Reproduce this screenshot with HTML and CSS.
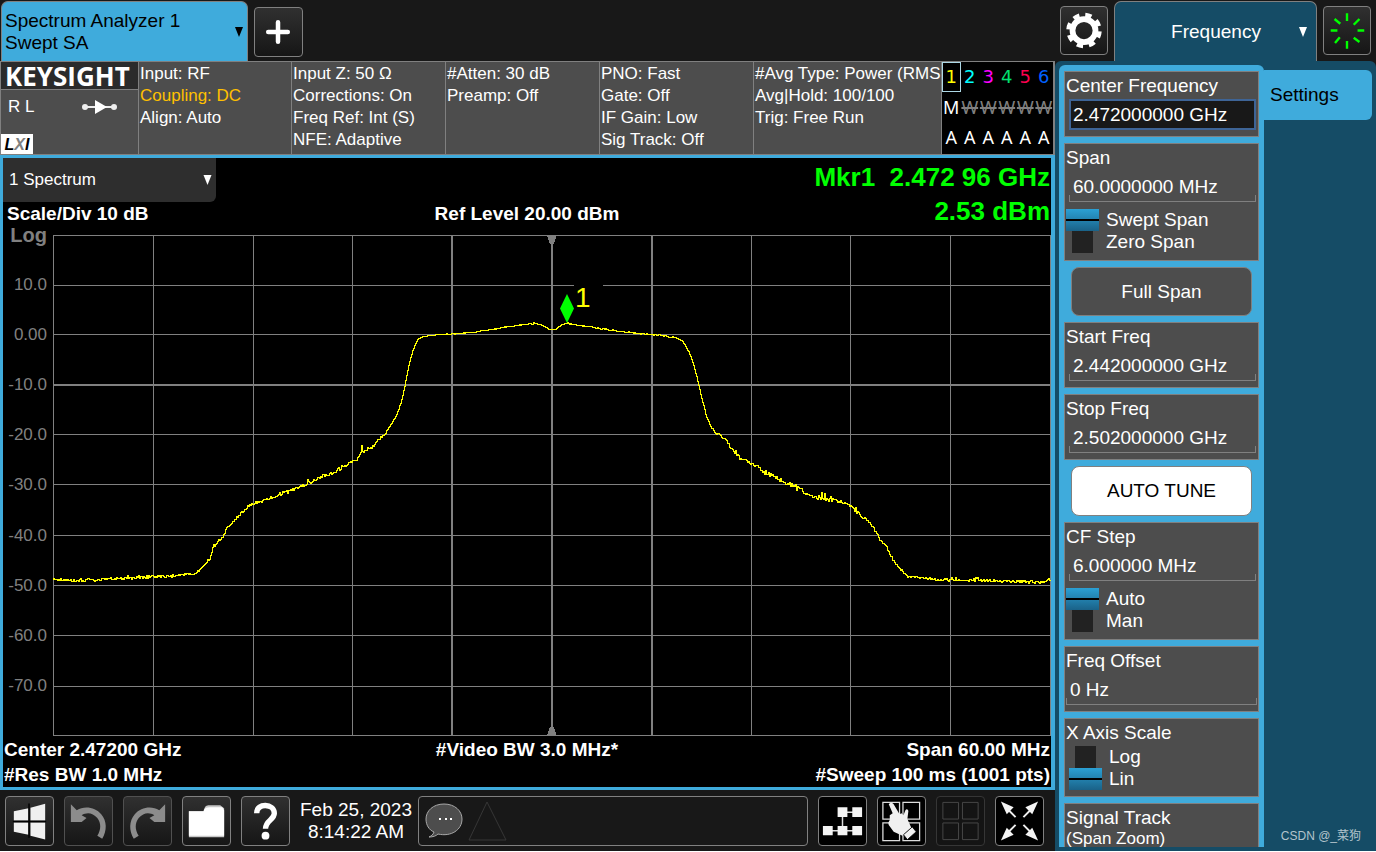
FILE: index.html
```html
<!DOCTYPE html>
<html lang="en">
<head>
<meta charset="utf-8">
<title>Spectrum Analyzer 1 - Swept SA</title>
<link rel="stylesheet" href="styles.css">
</head>
<body>
<div class="app">
  <div class="main">
    <header class="topbar">
      <button class="mode-tab" type="button"><span>Spectrum Analyzer 1<br>Swept SA</span><svg class="caret" viewBox="0 0 8 10"><path d="M0 0h8L4 10z"/></svg></button>
      <button class="key" type="button" aria-label="Add screen"><svg viewBox="0 0 48 48"><path d="M23.500 14v20M13.500 24h20" stroke="#fff" stroke-width="4.600" stroke-linecap="round"/></svg></button>
    </header>

    <section class="info">
      <div class="brand">
        <div class="brand-name">KEYSIGHT</div>
        <div class="brand-row"><span>R L</span><svg class="coupler" viewBox="0 0 36 14"><path d="M3 7h30" stroke="#eee" stroke-width="2"/><circle cx="3" cy="7" r="3" fill="#eee"/><circle cx="32" cy="7" r="3" fill="#eee"/><path d="M13 0l12 7-12 7z" fill="#fff"/></svg></div>
        <div class="lxi"><b>L</b><i>X</i><b>I</b></div>
      </div>
      <div class="info-cell">Input: RF<br><span class="amber">Coupling: DC</span><br>Align: Auto</div>
      <div class="info-cell">Input Z: 50 Ω<br>Corrections: On<br>Freq Ref: Int (S)<br>NFE: Adaptive</div>
      <div class="info-cell">#Atten: 30 dB<br>Preamp: Off</div>
      <div class="info-cell">PNO: Fast<br>Gate: Off<br>IF Gain: Low<br>Sig Track: Off</div>
      <div class="info-cell">#Avg Type: Power (RMS<br>Avg|Hold: 100/100<br>Trig: Free Run</div>
      <div class="traces">
        <span class="num t1">1</span><span class="num t2">2</span><span class="num t3">3</span><span class="num t4">4</span><span class="num t5">5</span><span class="num t6">6</span>
        <span>M</span><span class="off">W</span><span class="off">W</span><span class="off">W</span><span class="off">W</span><span class="off">W</span>
        <span>A</span><span>A</span><span>A</span><span>A</span><span>A</span><span>A</span>
      </div>
    </section>

    <section class="window">
      <div class="window-head">
        <div class="head-left">
          <div class="view-select">
            <select aria-label="View"><option>1 Spectrum</option></select>
            <svg class="caret" viewBox="0 0 8 10"><path d="M0 0h8L4 10z"/></svg>
          </div>
          <div class="scale">Scale/Div 10 dB</div>
        </div>
        <div class="ref">Ref Level 20.00 dBm</div>
        <div class="marker-read">Mkr1&nbsp; 2.472 96 GHz<br>2.53 dBm</div>
      </div>
      <div class="graph">
        <div class="scale-labels">
          <span class="log">Log</span><span>10.0</span><span>0.00</span><span>-10.0</span><span>-20.0</span><span>-30.0</span><span>-40.0</span><span>-50.0</span><span>-60.0</span><span>-70.0</span>
        </div>
        <div class="plot">
          <svg viewBox="0 0 998 501" preserveAspectRatio="none" shape-rendering="crispEdges">
            <path class="grid" d="M.5 0v501M100.500 0v501M200.500 0v501M299.500 0v501M698.500 0v501M797.500 0v501M897.500 0v501M997.500 0v501M0 .5h998M0 50.500h998M0 99.500h998M0 199.500h998M0 249.500h998M0 300.500h998M0 350.500h998M0 400.500h998M0 451.500h998M0 500.500h998"/>
            <path class="grid wide" d="M399 0v501M499 0v501M599 0v501M0 150h998"/>
            <path d="M494 0h10l-3 9h-4zM494 501h10l-3 -9h-4z" fill="#808080"/>
            <path id="trace" class="trace"/>
          </svg>
          <div class="marker"><svg viewBox="0 0 14 29"><path d="M7 0l7 14.500-7 14.500-7-14.500z" fill="#0f0"/></svg><span>1</span></div>
        </div>
      </div>
      <div class="window-foot">
        <div>Center 2.47200 GHz<br>#Res BW 1.0 MHz</div>
        <div>#Video BW 3.0 MHz*</div>
        <div class="right">Span 60.00 MHz<br>#Sweep 100 ms (1001 pts)</div>
      </div>
    </section>

    <footer class="toolbar">
      <button class="key" type="button" aria-label="Windows"><svg viewBox="0 0 48 48"><path d="M8 14l15-3v12.500H8zM25 10.500l15-4v17H25zM8 25.500h15V38L8 35zM25 25.500h15V43l-15-4z" fill="#f0f0f0"/><path d="M23.500 6v35M7 24.500h34" stroke="#000" stroke-width="1.500"/></svg></button>
      <button class="key dim" type="button" aria-label="Undo"><svg viewBox="0 0 48 48"><path d="M6 7l6 6c8-5 19-3 25 4 6 7 6 17 1 25l-5-3c4-6 4-13 0-18-5-6-11-6-16-3l5 3-5 4H6z" fill="#8c8c8c"/></svg></button>
      <button class="key dim" type="button" aria-label="Redo"><svg viewBox="0 0 48 48"><path d="M42 7l-6 6c-8-5-19-3-25 4-6 7-6 17-1 25l5-3c-4-6-4-13 0-18 5-6 11-6 16-3l-5 3 5 4h11z" fill="#8c8c8c"/></svg></button>
      <button class="key" type="button" aria-label="File"><svg viewBox="0 0 48 48"><path d="M6 14h15c1-5 3-6 6-6h11l4 3v29.500H6z" fill="#c8c8c8"/><path d="M6 14h15c1-3 3-4 6-4h13l2 3v26H6z" fill="#fff"/></svg></button>
      <button class="key" type="button" aria-label="Help"><svg viewBox="0 0 48 48"><path d="M15 16c0-11 18-10 18 0 0 7-9 7-9 16" fill="none" stroke="#fff" stroke-width="5.500"/><circle cx="24" cy="39" r="4" fill="#fff"/></svg></button>
      <div class="clock">Feb 25, 2023<br>8:14:22 AM</div>
      <div class="messages">
        <svg viewBox="0 0 82 40"><path d="M19 1C8 1 1 8 1 16c0 6 3 11 8 13-1 3-3 4-5 5 4 0 7-1 9-3 13 3 24-4 24-15C37 8 30 1 19 1z" fill="#4d4d4d" stroke="#a8a8a8"/><path d="M14 16h2m4 0h2m3 0h2" stroke="#fff" stroke-width="2"/><path d="M62-1L44 37h37z" fill="none" stroke="#363636"/></svg>
      </div>
      <button class="key black" type="button" aria-label="Sequence"><svg viewBox="0 0 48 48"><path d="M24 15h15M24 15v19M9 34h30" stroke="#ddd" stroke-width="1.500"/><path d="M19 10h10v10H19zM34 10h10v10H34zM4 29h10v9.500H4zM19 29h10v9.500H19zM34 29h10v9.500H34z" fill="#f4f4f4"/></svg></button>
      <button class="key black" type="button" aria-label="Touch layout"><svg viewBox="0 0 48 48"><path d="M5 5h17v17H5zM25.500 5h17v17h-17zM5 26h17v18H5zM25.500 26h17v18h-17z" fill="none" stroke="#ddd" stroke-width="1.300"/><path d="M11 7c1-2 4-2 5 0l6 10 2-1 2 2 2-5c1-2 3-1 3 1l-1 8 4 9-9 8-9-4-5-7c-1-2 0-3 1-5l0-5 3-2z" fill="#f0f0f0"/><path d="M26 38l9-8 4 5-9 8z" fill="#f0f0f0" stroke="#000" stroke-width=".8"/></svg></button>
      <button class="key faint" type="button" aria-label="Layout"><svg viewBox="0 0 48 48"><path d="M6 5h16v17H6zM26 5h16v17H26zM6 26h16v17H6zM26 26h16v17H26z" fill="none" stroke="#484848"/></svg></button>
      <button class="key black" type="button" aria-label="Full screen"><svg viewBox="0 0 48 48"><path d="M12 12l8 8M36 12l-8 8M12 36l8-8M36 36l-8-8" stroke="#eee" stroke-width="2"/><path d="M5 4l13 6-7 7zM43 4l-13 6 7 7zM5 44l13-6-7-7zM43 44l-13-6 7-7z" fill="#f4f4f4"/></svg></button>
    </footer>
  </div>

  <aside class="side">
    <div class="side-top">
      <button class="key" type="button" aria-label="Settings menu"><svg viewBox="0 0 48 48"><circle cx="24" cy="24" r="12" fill="none" stroke="#fff" stroke-width="6"/><circle cx="24" cy="24" r="16" fill="none" stroke="#fff" stroke-width="5" stroke-dasharray="6.500 6.066" transform="rotate(3 24 24)"/></svg></button>
      <button class="menu-tab" type="button"><span>Frequency</span><svg class="caret" viewBox="0 0 8 10"><path d="M0 0h8L4 10z"/></svg></button>
      <button class="key" type="button" aria-label="Sweep status"><svg viewBox="0 0 48 48"><path d="M24 6v8M24 35v8M7 24h7M35 24h7M11 12l6 5M37 12l-6 6M11.500 37l5-6M37 36l-6-4.500" stroke="#0f0" stroke-width="2.500"/></svg></button>
    </div>
    <div class="side-body">
      <form class="controls">
        <div class="box"><label for="cf">Center Frequency</label><input class="field active" id="cf" value="2.472000000 GHz"></div>
        <div class="box"><label for="span">Span</label><input class="field" id="span" value="60.0000000 MHz">
          <div class="toggle"><label><input type="radio" name="sp" checked>Swept Span</label><label><input type="radio" name="sp">Zero Span</label></div>
        </div>
        <button class="action" type="button">Full Span</button>
        <div class="box"><label for="start">Start Freq</label><input class="field" id="start" value="2.442000000 GHz"></div>
        <div class="box"><label for="stop">Stop Freq</label><input class="field" id="stop" value="2.502000000 GHz"></div>
        <button class="action light" type="button">AUTO TUNE</button>
        <div class="box"><label for="step">CF Step</label><input class="field" id="step" value="6.000000 MHz">
          <div class="toggle"><label><input type="radio" name="st" checked>Auto</label><label><input type="radio" name="st">Man</label></div>
        </div>
        <div class="box"><label for="off">Freq Offset</label><input class="field full" id="off" value="0 Hz"></div>
        <div class="box"><span class="title">X Axis Scale</span>
          <div class="toggle inset"><label><input type="radio" name="xs">Log</label><label><input type="radio" name="xs" checked>Lin</label></div>
        </div>
        <div class="box"><span class="title">Signal Track</span><span class="sub">(Span Zoom)</span></div>
      </form>
      <div class="side-tabs">
        <button class="side-tab" type="button">Settings</button>
        <div class="credit">CSDN @_菜狗</div>
      </div>
    </div>
  </aside>
</div>
<script src="trace.js"></script>
</body>
</html>
```

FILE: styles.css
```css
* { box-sizing: border-box; }
body { margin: 0; background: #fff; font: 19px/22px "Liberation Sans", Arial, "Noto Sans CJK SC", sans-serif; color: #fff; }
button, input, select { font: inherit; color: inherit; margin: 0; }
button { padding: 0; cursor: pointer; }
svg { display: block; }

.app { display: flex; height: calc(100vh - 1px); min-height: 600px; background: #181818; overflow: hidden; }
.main { flex: 1; min-width: 0; display: flex; flex-direction: column; }

.key { flex: none; width: 49px; height: 50px; border: 1px solid #808080; border-radius: 4px; background: linear-gradient(#303030, #161616); }
.key svg { width: 100%; height: 100%; }
.key.dim { border-color: #505050; }
.key.black { background: #000; }
.key.faint { border-color: #363636; background: #141414; }
.caret { width: 8px; height: 10px; fill: currentColor; }

.topbar { height: 61px; flex: none; display: flex; gap: 6px; padding: 1px 1px 0; }
.topbar .key { margin-top: 6px; }
.mode-tab { width: 247px; display: flex; align-items: center; justify-content: space-between; padding: 0 4px 0 3px; border: 1px solid #808080; border-bottom: 0; border-radius: 7px 7px 0 0; background: #3fabdc; color: #000; text-align: left; }

.info { flex: none; height: 94px; display: grid; grid-template-columns: 138fr 153fr 154fr 154fr 154fr 188fr 114fr; border-top: 1px solid #808080; border-bottom: 1px solid #808080; background: #4d4d4d; font-size: 17px; }
.info-cell { border-left: 1px solid #808080; padding: 1px 0 0 1px; white-space: nowrap; overflow: hidden; }
.amber { color: #ffc000; }
.brand { display: flex; flex-direction: column; border-left: 1px solid #808080; }
.brand-name { height: 28px; padding-left: 4px; border-bottom: 1px solid #808080; background: #2b2b2b; font: bold 26px/28px "Open Sans", sans-serif; }
.brand-row { display: flex; justify-content: space-between; align-items: center; padding: 6px 20px 0 7px; }
.coupler { width: 36px; height: 14px; }
.lxi { width: 32px; height: 20px; margin-top: auto; background: #fff; color: #000; font: italic bold 16px/21px "Liberation Sans", sans-serif; text-align: center; }
.lxi i { color: #808080; }
.traces { display: grid; grid-template-columns: repeat(6, 1fr); grid-template-rows: 30px 30px 30px; border: solid #808080; border-width: 0 2px 0 1px; background: #000; font: 18px/30px "Noto Sans", sans-serif; text-align: center; }
.num { font-family: "DejaVu Sans", sans-serif; font-size: 18px; }
.t1 { color: #ff0; border: 1px solid #add8e6; line-height: 28px; }
.t2 { color: #0ff; }
.t3 { color: #f0f; }
.t4 { color: #00e070; }
.t5 { color: #ff0050; }
.t6 { color: #0060ff; }
.off { color: #808080; text-decoration: line-through 2px; }

.window { flex: 1; min-height: 0; display: flex; flex-direction: column; border: solid #3fabdc; border-width: 3px 4px 3px 3px; background: #000; font-weight: bold; }
.window-head { display: grid; grid-template-columns: 1fr auto 1fr; height: 77px; flex: none; }
.view-select { width: 213px; height: 44px; position: relative; }
.view-select select { appearance: none; width: 100%; height: 100%; padding: 0 6px; border: 0; border-radius: 0 0 6px 0; background: #2e2e2e; font-size: 17px; font-weight: normal; }
.view-select .caret { position: absolute; right: 4px; top: 17px; width: 9px; pointer-events: none; }
.scale { padding-left: 4px; line-height: 24px; }
.ref { align-self: end; padding-bottom: 9px; line-height: 24px; }
.marker-read { padding: 2px 1px 0 0; font-size: 26px; line-height: 34px; color: #0f0; text-align: right; }
.graph { flex: 1; min-height: 0; display: flex; }
.scale-labels { width: 50px; flex: none; margin: -10px 0 10px; padding-right: 6px; display: grid; grid-template-rows: repeat(10, 1fr); font-size: 17px; line-height: 20px; font-weight: normal; color: #808080; text-align: right; }
.log { font-size: 20px; font-weight: bold; }
.plot { flex: 1; min-width: 0; position: relative; }
.plot > svg { width: 100%; height: 100%; }
.grid { fill: none; stroke: #808080; stroke-width: 1; }
.wide { stroke-width: 2; }
.trace { fill: none; stroke: #ff0; stroke-width: 1; }
.marker { position: absolute; left: calc(51.500% - 7px); bottom: 82.500%; display: flex; align-items: flex-end; color: #ff0; }
.marker svg { width: 14px; height: 29px; }
.marker span { margin-bottom: 12px; padding: 0 12px 0 1px; background: #000; font-size: 28px; font-weight: normal; line-height: 26px; }
.window-foot { flex: none; display: grid; grid-template-columns: 1fr auto 1fr; height: 51px; padding: 1px 1px 0; line-height: 25px; white-space: nowrap; }
.right { text-align: right; }

.toolbar { flex: none; height: 61px; display: flex; align-items: center; gap: 10px; padding: 0 11px 0 5px; }
.clock { text-align: center; white-space: nowrap; margin: 0 -4px 0 0; }
.messages { flex: 1; height: 50px; padding: 6px; border: 1px solid #808080; border-radius: 4px; }
.messages svg { width: 82px; height: 40px; overflow: visible; }

.side { width: 321px; flex: none; display: flex; flex-direction: column; }
.side-top { flex: none; height: 61px; display: flex; gap: 6px; padding: 1px 5px 0; }
.side-top .key { margin-top: 5px; width: 48px; height: 49px; }
.menu-tab { flex: 1; display: flex; align-items: center; padding: 0 9px 0 18px; border: 1px solid #808080; border-bottom: 0; border-radius: 7px 7px 0 0; background: #154c66; }
.menu-tab span { flex: 1; }
.side-body { flex: 1; min-height: 0; display: flex; padding: 4px; border-radius: 6px 6px 0 0; background: #154c66; }
.controls { width: 205px; flex: none; display: flex; flex-direction: column; gap: 6px; padding: 6px 5px 0; border-radius: 6px 6px 0 0; background: #3fabdc; overflow: hidden; }
.box { flex: none; padding: 0 1px 6px; border: 1px solid #808080; background: #4d4d4d; }
.box > label, .title { display: block; line-height: 27px; }
.sub { display: block; font-size: 17px; line-height: 16px; }
.field { display: block; width: 187px; height: 31px; margin-left: 3px; padding: 0 4px; border: 0; outline: 0; background: linear-gradient(#808080, #808080) left bottom / 1px 7px no-repeat, linear-gradient(#808080, #808080) right bottom / 1px 7px no-repeat, linear-gradient(#808080, #808080) left bottom / 100% 1px no-repeat; }
.field.active { padding: 0 2px; border: 2px solid #3e6496; background: #181818; }
.field.full { width: 191px; margin-left: 0; }
.toggle { padding: 7px 0 1px; }
.toggle.inset { padding: 0 0 0 3px; }
.toggle label { display: flex; align-items: center; gap: 7px; height: 22px; }
.toggle input { appearance: none; width: 33px; height: 22px; border: solid transparent; border-width: 0 6px; background: #222; background-clip: padding-box; }
.toggle input:checked { border: 0; background: linear-gradient(transparent 10px, #000 10px, #000 12px, transparent 12px), linear-gradient(#2ba0d4, #1a6288); }
.action { flex: none; width: 181px; height: 49px; align-self: center; border: 1px solid #808080; border-radius: 8px; background: #4d4d4d; }
.action.light { height: 50px; background: #fff; color: #000; }
.side-tabs { flex: 1; display: flex; flex-direction: column; padding-top: 5px; }
.side-tab { height: 50px; padding-left: 6px; border: 0; border-radius: 0 6px 6px 0; background: #3fabdc; color: #000; text-align: left; }
.credit { margin-top: auto; padding-right: 11px; color: #b4c4cc; font-size: 12px; line-height: 22px; text-align: right; }
```

FILE: trace.js
```js
// Trace envelope as x,y pairs in plot units; noise is the peak deviation for each stretch.
const envelope = [
  [0, 344, 2], [22, 345, 2], [67, 343, 2], [100, 341, 1.5], [122, 340.5, 1], [132, 339, 1], [142, 338.5, 1],
  [147, 334, 1], [152, 329, 1], [157, 324, 1], [160, 312, 1], [165, 307, 1], [170, 301, 1], [174, 293, 1],
  [180, 286, 2], [187, 279, 2], [193, 273, 2], [200, 268, 2], [209, 265.5, 2], [222, 261, 2.5], [237, 255, 2.5],
  [247, 252, 2.5], [257, 247, 2.5], [267, 242, 2.5], [280, 237, 2.5], [292, 230, 2], [299, 226, 2], [304, 224, 2],
  [308, 217, 3], [312, 215, 2], [319, 212, 2], [325, 205, 2], [332, 199, 1], [337, 191, 1], [340, 186, 1],
  [344, 179, 1], [349, 165, 1], [353, 145, 1], [356, 130, 1], [360, 115, 0.5], [365, 104, 0], [370, 101, 0],
  [387, 99, 0.5], [407, 98, 0.5], [427, 96, 0.5], [447, 92.5, 0.5], [464, 90, 0.5], [477, 88.5, 0.7],
  [484, 88, 0.7], [492, 91, 0], [496, 93.5, 0], [503, 93.5, 0], [509, 89, 0], [514, 88, 0.5], [527, 90, 0.5],
  [547, 93, 0.7], [567, 96, 0.7], [587, 98, 0.7], [607, 100, 0.5], [622, 102, 0.3], [630, 106, 0.5],
  [636, 116, 0.5], [641, 130, 1], [646, 150, 1], [650, 167, 1], [654, 182, 1], [659, 193, 1], [664, 198, 2],
  [672, 204, 2], [680, 214, 2], [687, 223, 1.5], [697, 227, 2.5], [712, 237, 3], [727, 244, 3], [747, 254, 3],
  [762, 261, 3], [780, 264, 2.5], [795, 269, 2.5], [802, 275, 2.5], [812, 283, 2], [820, 291, 2], [827, 304, 1],
  [833, 310, 2], [840, 324, 1], [847, 333, 1], [855, 341, 1], [872, 343, 1.5], [897, 344.5, 1.5],
  [947, 345.5, 2], [987, 347, 1.5], [997, 345, 1]
];
let seed = 11;
const random = () => (seed = (seed * 16807) % 2147483647) / 2147483647;
let segment = 0;
let d = "";
for (let x = 0; x <= 997; x++) {
  while (x > envelope[segment + 1][0]) segment++;
  const [x0, y0, noise] = envelope[segment];
  const [x1, y1] = envelope[segment + 1];
  const base = y0 + (y1 - y0) * (x - x0) / (x1 - x0);
  const spike = random() > 0.9 ? (random() - 0.7) * 2.5 * noise : 0;
  const y = Math.round(base + (random() - 0.5) * noise * 1.5 + spike) + 0.5;
  d += d ? `V${y}H${x + 0.5}` : `M0.5 ${y}`;
}
document.getElementById("trace").setAttribute("d", d);
```
